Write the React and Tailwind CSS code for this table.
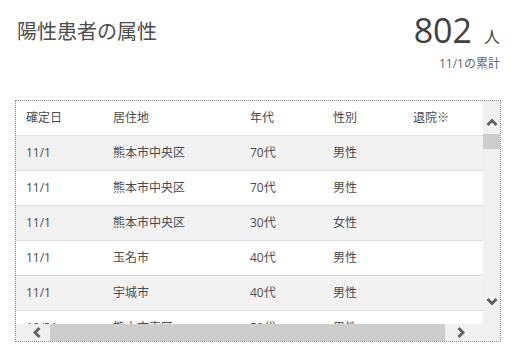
const rows = [
  ["11/1", "熊本市中央区", "70代", "男性", ""],
  ["11/1", "熊本市中央区", "70代", "男性", ""],
  ["11/1", "熊本市中央区", "30代", "女性", ""],
  ["11/1", "玉名市", "40代", "男性", ""],
  ["11/1", "宇城市", "40代", "男性", ""],
  ["10/31", "熊本市東区", "50代", "男性", ""],
];

function Chevron({ dir }) {
  const pts = {
    up: "1.5,7 6,2.5 10.5,7",
    down: "1.5,1 6,5.5 10.5,1",
    left: "6.5,1 2,5.5 6.5,10",
    right: "1.5,1 6,5.5 1.5,10",
  }[dir];
  const vertical = dir === "up" || dir === "down";
  return (
    <svg
      width={vertical ? 12 : 8}
      height={vertical ? 8 : 11}
      viewBox={vertical ? "0 0 12 8" : "0 0 8 11"}
      className="block"
    >
      <polyline
        points={pts}
        fill="none"
        stroke="#5f5f5f"
        strokeWidth="2.8"
        strokeLinecap="butt"
        strokeLinejoin="miter"
      />
    </svg>
  );
}

export default function App() {
  return (
    <div className="w-[519px] h-[358px] bg-white text-[#4a4a4a] font-['Open_Sans','Noto_Sans_CJK_JP',sans-serif] overflow-hidden">
      <div className="h-[100px] flex justify-between items-start pl-[17px] pr-[19px]">
        <h1 className="pt-[17px] text-[20px] leading-[30px] font-normal text-[#4d4d4d]">
          陽性患者の属性
        </h1>
        <div className="flex flex-col items-end pt-[13px]">
          <div className="flex items-baseline">
            <span className="text-[34px] leading-[34px] text-[#404040]">802</span>
            <span className="ml-[12px] text-[16px] leading-[16px] text-[#404040]">人</span>
          </div>
          <div className="mt-[8px] text-[12px] leading-[18px] text-[#666]">11/1の累計</div>
        </div>
      </div>

      <div className="ml-[15px] w-[486px] h-[242px] border border-dotted border-[#8a8a8a] grid grid-cols-[467px_17px] grid-rows-[223px_17px]">
        <div className="overflow-hidden">
          <div className="w-[507px]">
            <div className="grid grid-cols-[87px_137px_83px_80px_120px] h-[35px] items-center border-b border-[#e2e2e2] bg-white text-[12px]">
              {["確定日", "居住地", "年代", "性別", "退院※"].map((h) => (
                <div key={h} className="pl-[10px]">{h}</div>
              ))}
            </div>
            {rows.map((r, i) => (
              <div
                key={i}
                className={
                  "grid grid-cols-[87px_137px_83px_80px_120px] h-[35px] items-center border-b border-[#dcdcdc] text-[12px] " +
                  (i % 2 === 0 ? "bg-[#f2f2f2]" : "bg-white")
                }
              >
                {r.map((c, j) => (
                  <div key={j} className="pl-[10px]">{c}</div>
                ))}
              </div>
            ))}
          </div>
        </div>

        <div className="bg-[#f0f0f0] flex flex-col">
          <div className="h-[33px] pt-[17px] flex justify-center">
            <Chevron dir="up" />
          </div>
          <div className="h-[15px] bg-[#cdcdcd]" />
          <div className="flex-1" />
          <div className="h-[33px] pt-[7px] flex justify-center">
            <Chevron dir="down" />
          </div>
        </div>

        <div className="bg-[#f0f0f0] flex items-center">
          <div className="w-[34px] h-full flex items-center pl-[17px]">
            <Chevron dir="left" />
          </div>
          <div className="w-[395px] h-full bg-[#cdcdcd]" />
          <div className="flex-1 h-full flex items-center pl-[12px]">
            <Chevron dir="right" />
          </div>
        </div>

        <div className="bg-[#f0f0f0]" />
      </div>
    </div>
  );
}
